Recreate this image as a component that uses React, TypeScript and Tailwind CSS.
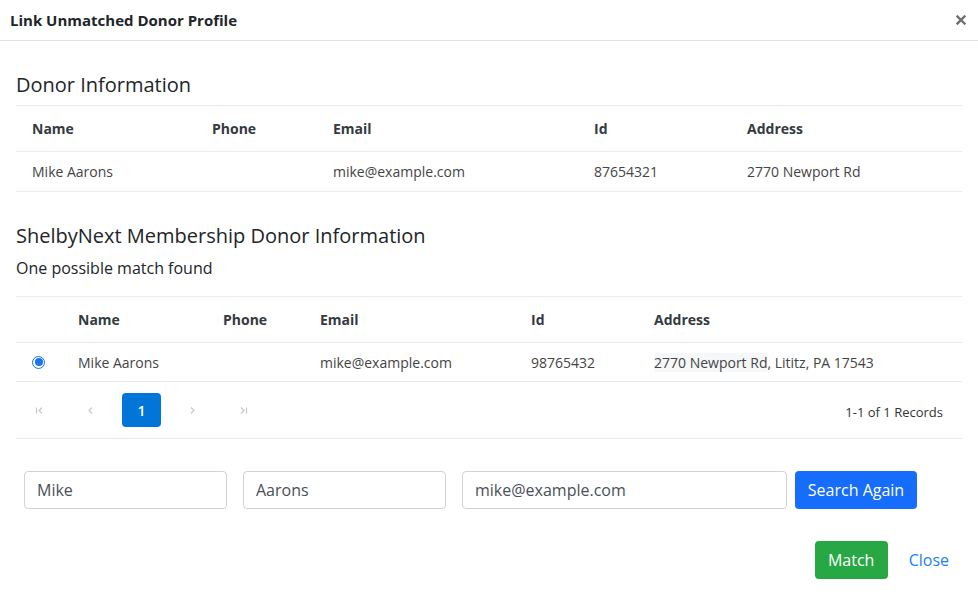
const donorCols = "grid grid-cols-[180px_121px_261px_153px_1fr]";
const matchCols = "grid grid-cols-[46px_145px_97px_211px_123px_1fr]";

function PageIcon({ kind }: { kind: "first" | "prev" | "next" | "last" }) {
  return (
    <svg width="9" height="9" viewBox="0 0 9 9" fill="none" stroke="#c8c8c8" strokeWidth="1.2">
      {kind === "first" && (
        <>
          <path d="M1.5 1.5v6" />
          <path d="M7 1.5 4 4.5l3 3" />
        </>
      )}
      {kind === "prev" && <path d="M6 1.5 3 4.5l3 3" />}
      {kind === "next" && <path d="M3 1.5l3 3-3 3" />}
      {kind === "last" && (
        <>
          <path d="M2 1.5l3 3-3 3" />
          <path d="M7.5 1.5v6" />
        </>
      )}
    </svg>
  );
}

export default function App() {
  return (
    <div className="min-h-screen w-full bg-white font-['Open_Sans',sans-serif] text-[#212529]">
      {/* Header */}
      <div className="flex h-[41px] items-center justify-between border-b border-[#dee2e6] pl-[10px] pr-[9px]">
        <h1 className="text-[15px] font-bold text-[#212529]">Link Unmatched Donor Profile</h1>
        <button className="flex h-4 w-4 items-center justify-center">
          <svg width="10" height="10" viewBox="0 0 10 10" stroke="#6f6f6f" strokeWidth="2.4" strokeLinecap="square">
            <path d="M1.5 1.5l7 7M8.5 1.5l-7 7" />
          </svg>
        </button>
      </div>

      {/* Body */}
      <div className="px-4">
        <h2 className="mt-8 text-[20px] leading-[24px] font-normal">Donor Information</h2>
        <div className="mt-2 border-t border-[#e9ecef] text-[14px]">
          <div className={`${donorCols} h-[46px] items-center border-b border-[#e9ecef] font-bold text-[#343a40]`}>
            <div className="px-4">Name</div>
            <div className="px-4">Phone</div>
            <div className="px-4">Email</div>
            <div className="px-4">Id</div>
            <div className="px-4">Address</div>
          </div>
          <div className={`${donorCols} h-[40px] items-center border-b border-[#e9ecef] text-[#444]`}>
            <div className="px-4">Mike Aarons</div>
            <div className="px-4"></div>
            <div className="px-4">mike@example.com</div>
            <div className="px-4">87654321</div>
            <div className="px-4">2770 Newport Rd</div>
          </div>
        </div>

        <h2 className="mt-8 text-[20px] leading-[24px] font-normal">ShelbyNext Membership Donor Information</h2>
        <p className="mt-2 text-[16px] leading-[24px]">One possible match found</p>

        <div className="mt-4 border-t border-[#e9ecef] text-[14px]">
          <div className={`${matchCols} h-[46px] items-center border-b border-[#e9ecef] font-bold text-[#343a40]`}>
            <div className="px-4"></div>
            <div className="px-4">Name</div>
            <div className="px-4">Phone</div>
            <div className="px-4">Email</div>
            <div className="px-4">Id</div>
            <div className="px-4">Address</div>
          </div>
          <div className={`${matchCols} h-[39px] items-center border-b border-[#e9ecef] text-[#444]`}>
            <div className="flex items-center px-4">
              <span className="flex h-[13px] w-[13px] items-center justify-center rounded-full border border-[#1a73f0] bg-white">
                <span className="h-[8px] w-[8px] rounded-full bg-[#1a73f0]" />
              </span>
            </div>
            <div className="px-4">Mike Aarons</div>
            <div className="px-4"></div>
            <div className="px-4">mike@example.com</div>
            <div className="px-4">98765432</div>
            <div className="px-4 whitespace-nowrap">
              <span className="bg-[#f6f7f8]">2770 Newport Rd</span>, Lititz, PA 17543
            </div>
          </div>
          <div className="flex h-[57px] items-center justify-between border-b border-[#e9ecef] pl-1 pr-[19px]">
            <div className="flex items-center gap-3">
              <span className="flex h-[34px] w-[39px] items-center justify-center"><PageIcon kind="first" /></span>
              <span className="flex h-[34px] w-[39px] items-center justify-center"><PageIcon kind="prev" /></span>
              <span className="flex h-[34px] w-[39px] items-center justify-center rounded-[4px] bg-[#0275d8] text-[14px] font-semibold text-white">1</span>
              <span className="flex h-[34px] w-[39px] items-center justify-center"><PageIcon kind="next" /></span>
              <span className="flex h-[34px] w-[39px] items-center justify-center"><PageIcon kind="last" /></span>
            </div>
            <span className="pt-[5px] text-[13px] text-[#333]">1-1 of 1 Records</span>
          </div>
        </div>

        {/* Search row */}
        <div className="mt-8 flex items-center pl-2">
          <input
            defaultValue="Mike"
            className="h-[38px] w-[203px] rounded-[4px] border border-[#ced4da] px-3 text-[16px] text-[#495057] outline-none"
          />
          <input
            defaultValue="Aarons"
            className="ml-4 h-[38px] w-[203px] rounded-[4px] border border-[#ced4da] px-3 text-[16px] text-[#495057] outline-none"
          />
          <input
            defaultValue="mike@example.com"
            className="ml-4 h-[38px] w-[325px] rounded-[4px] border border-[#ced4da] px-3 text-[16px] text-[#495057] outline-none"
          />
          <button className="ml-2 h-[38px] w-[122px] rounded-[4px] bg-[#176dfb] text-[16px] text-white">Search Again</button>
        </div>

        {/* Footer */}
        <div className="mt-8 flex items-center justify-end pr-[13px]">
          <button className="h-[38px] w-[73px] rounded-[4px] bg-[#28a745] text-[16px] text-white">Match</button>
          <button className="ml-[21px] text-[16px] text-[#1a7ff5]">Close</button>
        </div>
      </div>
    </div>
  );
}
